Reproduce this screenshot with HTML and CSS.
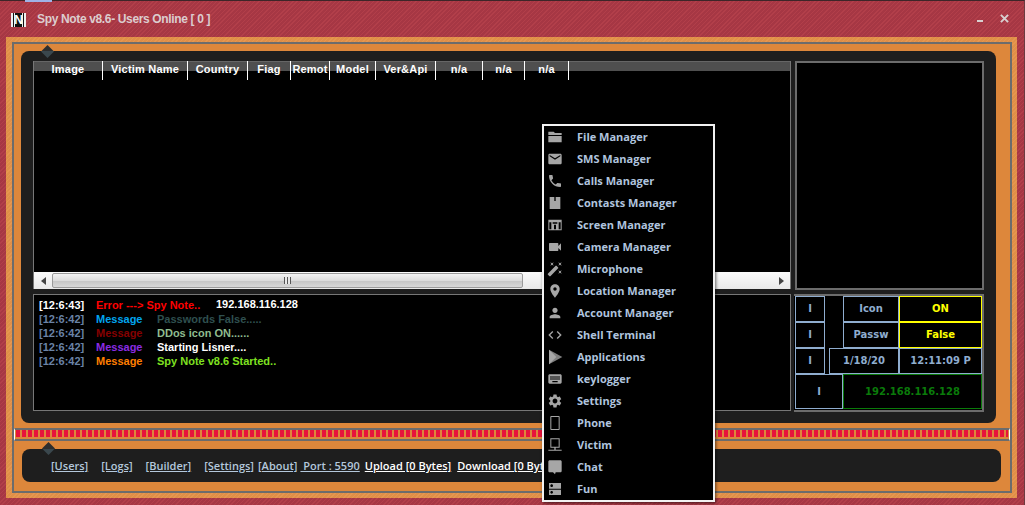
FILE: index.html
```html
<!DOCTYPE html>
<html lang="en">
<head>
  <meta charset="UTF-8" />
  <title>Spy Note v8.6</title>
  <link rel="stylesheet" href="styles.css">
</head>
<body>
  <div class="window">
    <div class="taskbar-sliver"></div>

    <div class="titlebar">
      <span class="logo">N</span>
      <span class="title">Spy Note v8.6- Users Online [ 0 ]</span>
      <span class="win-btn win-min"></span>
      <svg class="win-btn win-close" viewBox="0 0 10 10"><path d="M1 1l8 8M9 1l-8 8" /></svg>
    </div>

    <div class="frame">
      <div class="frame-inner">
        <div class="panel main-panel">
          <span class="notch"></span>

          <div class="users-box">
            <div class="users-head">
              <span class="col col-1">Image</span>
              <span class="col col-2">Victim Name</span>
              <span class="col col-3">Country</span>
              <span class="col col-4">Fiag</span>
              <span class="col col-5">Remot</span>
              <span class="col col-6">Model</span>
              <span class="col col-7">Ver&amp;Api</span>
              <span class="col col-8">n/a</span>
              <span class="col col-9">n/a</span>
              <span class="col col-10">n/a</span>
            </div>
            <div class="users-body"></div>
            <div class="hscroll">
              <span class="arrow arrow-left"></span>
              <span class="thumb"><span class="grip"></span></span>
              <span class="arrow arrow-right"></span>
            </div>
          </div>

          <div class="preview-box"></div>

          <div class="log-box">
            <div class="log-row first">
              <span class="time">[12:6:43]</span>
              <span class="kind kind-wide red">Error ---&gt; Spy Note..</span>
              <span class="msg white up">192.168.116.128</span>
            </div>
            <div class="log-row">
              <span class="time">[12:6:42]</span>
              <span class="kind blue">Message</span>
              <span class="msg slate">Passwords False.....</span>
            </div>
            <div class="log-row">
              <span class="time">[12:6:42]</span>
              <span class="kind maroon">Message</span>
              <span class="msg sea">DDos icon ON......</span>
            </div>
            <div class="log-row">
              <span class="time">[12:6:42]</span>
              <span class="kind violet">Message</span>
              <span class="msg white">Starting Lisner....</span>
            </div>
            <div class="log-row">
              <span class="time">[12:6:42]</span>
              <span class="kind amber">Message</span>
              <span class="msg lime">Spy Note v8.6 Started..</span>
            </div>
          </div>

          <div class="info-box">
            <div class="cell c-i r1">I</div>
            <div class="cell c-label r1">Icon</div>
            <div class="cell c-val r1 yellow">ON</div>
            <div class="cell c-i r2">I</div>
            <div class="cell c-label r2">Passw</div>
            <div class="cell c-val r2 yellow">False</div>
            <div class="cell c-i r3">I</div>
            <div class="cell c-date r3">1/18/20</div>
            <div class="cell c-val r3">12:11:09 P</div>
            <div class="cell c-i-wide r4">I</div>
            <div class="cell c-ip r4">192.168.116.128</div>
          </div>
        </div>

        <div class="progress"><div class="blocks"></div></div>

        <div class="panel status-panel">
          <span class="notch"></span>
          <a class="link l-users">[Users]</a>
          <a class="link l-logs">[Logs]</a>
          <a class="link l-builder">[Builder]</a>
          <a class="link l-settings">[Settings]</a>
          <a class="link l-about">[About]</a>
          <a class="link l-port">&nbsp;Port : 5590</a>
          <a class="link bright l-upload">Upload [0 Bytes]</a>
          <a class="link bright l-download">Download [0 Bytes]</a>
        </div>
      </div>
    </div>
  </div>

  <ul class="menu">
    <li><svg viewBox="0 0 24 24"><path d="M2 4h8l2 2h10v3H2zM2 10.500h20V20H2z" /></svg>File Manager</li>
    <li><svg viewBox="0 0 24 24"><path d="M20 4H4c-1.100 0-1.990.9-1.990 2L2 18c0 1.100.9 2 2 2h16c1.100 0 2-.9 2-2V6c0-1.100-.9-2-2-2zm0 4l-8 5-8-5V6l8 5 8-5v2z" /></svg>SMS Manager</li>
    <li><svg viewBox="0 0 24 24"><path d="M6.620 10.790c1.440 2.830 3.760 5.140 6.590 6.590l2.200-2.200c.27-.27.67-.36 1.020-.24 1.120.37 2.330.57 3.570.57.55 0 1 .45 1 1V20c0 .55-.45 1-1 1-9.390 0-17-7.610-17-17 0-.55.45-1 1-1h3.500c.55 0 1 .45 1 1 0 1.250.2 2.450.57 3.570.11.35.03.74-.25 1.020l-2.200 2.200z" /></svg>Calls Manager</li>
    <li><svg viewBox="0 0 24 24"><path d="M4 3h7v6h2V3h7v18H4z" /></svg>Contasts Manager</li>
    <li><svg viewBox="0 0 24 24"><path fill-rule="evenodd" d="M2 4h20v16H2zM3.500 8v10.500h3V8zm5 0v2h7V8zm2 3.500v7h3v-7zm7-3.500v10.500h3V8z" /></svg>Screen Manager</li>
    <li><svg viewBox="0 0 24 24"><path d="M17 10.500V7c0-.55-.45-1-1-1H4c-.55 0-1 .45-1 1v10c0 .55.45 1 1 1h12c.55 0 1-.45 1-1v-3.500l4 4v-11l-4 4z" /></svg>Camera Manager</li>
    <li><svg viewBox="0 0 24 24"><path d="M7.500 5.600L10 7 8.600 4.500 10 2 7.500 3.400 5 2l1.400 2.500L5 7zm12 9.800L17 14l1.400 2.500L17 19l2.500-1.400L22 19l-1.400-2.500L22 14zM22 2l-2.500 1.400L17 2l1.400 2.500L17 7l2.500-1.400L22 7l-1.400-2.500zm-7.630 5.290c-.39-.39-1.020-.39-1.410 0L1.290 18.960c-.39.39-.39 1.020 0 1.410l2.340 2.340c.39.39 1.020.39 1.410 0L16.700 11.050c.39-.39.39-1.020 0-1.410l-2.330-2.350z" /></svg>Microphone</li>
    <li><svg viewBox="0 0 24 24"><path d="M12 2C8.130 2 5 5.130 5 9c0 5.250 7 13 7 13s7-7.750 7-13c0-3.870-3.130-7-7-7zm0 9.500c-1.380 0-2.500-1.120-2.500-2.500s1.120-2.500 2.500-2.500 2.500 1.120 2.500 2.500-1.120 2.500-2.500 2.500z" /></svg>Location Manager</li>
    <li><svg viewBox="0 0 24 24"><path d="M12 12c2.210 0 4-1.790 4-4s-1.790-4-4-4-4 1.790-4 4 1.790 4 4 4zm0 2c-2.670 0-8 1.340-8 4v2h16v-2c0-2.660-5.330-4-8-4z" /></svg>Account Manager</li>
    <li><svg viewBox="0 0 24 24"><path d="M9.400 16.600L4.800 12l4.600-4.600L8 6l-6 6 6 6 1.400-1.400zm5.200 0l4.600-4.600-4.600-4.600L16 6l6 6-6 6-1.400-1.400z" /></svg>Shell Terminal</li>
    <li><svg viewBox="0 0 24 24"><path class="shade" d="M3 1l20 11L3 23z" /><path d="M3 1l11 11L3 23z" /></svg>Applications</li>
    <li><svg viewBox="0 0 24 24"><path d="M20 5H4c-1.100 0-1.990.9-1.990 2L2 17c0 1.100.9 2 2 2h16c1.100 0 2-.9 2-2V7c0-1.100-.9-2-2-2zm-9 3h2v2h-2V8zm0 3h2v2h-2v-2zM8 8h2v2H8V8zm0 3h2v2H8v-2zm-1 2H5v-2h2v2zm0-3H5V8h2v2zm9 7H8v-2h8v2zm0-4h-2v-2h2v2zm0-3h-2V8h2v2zm3 3h-2v-2h2v2zm0-3h-2V8h2v2z" /></svg>keylogger</li>
    <li><svg viewBox="0 0 24 24"><path d="M19.140 12.940c.04-.3.06-.61.06-.94 0-.32-.02-.64-.07-.94l2.030-1.580c.18-.14.23-.41.12-.61l-1.920-3.320c-.12-.22-.37-.29-.59-.22l-2.390.96c-.5-.38-1.030-.7-1.620-.94l-.36-2.540c-.04-.24-.24-.41-.48-.41h-3.840c-.24 0-.43.17-.47.41l-.36 2.540c-.59.24-1.130.57-1.620.94l-2.390-.96c-.22-.08-.47 0-.59.22L2.740 8.870c-.12.21-.08.47.12.61l2.030 1.580c-.05.3-.09.63-.09.94s.02.64.07.94l-2.030 1.580c-.18.14-.23.41-.12.61l1.920 3.320c.12.22.37.29.59.22l2.390-.96c.5.38 1.030.7 1.620.94l.36 2.540c.05.24.24.41.48.41h3.840c.24 0 .44-.17.47-.41l.36-2.540c.59-.24 1.130-.56 1.620-.94l2.390.96c.22.08.47 0 .59-.22l1.920-3.320c.12-.22.07-.47-.12-.61l-2.010-1.580zM12 15.600c-1.980 0-3.600-1.620-3.600-3.600s1.620-3.600 3.600-3.600 3.600 1.620 3.600 3.600-1.620 3.600-3.600 3.600z" /></svg>Settings</li>
    <li><svg viewBox="0 0 24 24"><path fill-rule="evenodd" d="M6.500 1.500h11c.8 0 1.500.7 1.500 1.500v18c0 .8-.7 1.500-1.500 1.500h-11c-.8 0-1.500-.7-1.500-1.500V3c0-.8.7-1.500 1.500-1.500zM6.500 3v18h11V3z" /></svg>Phone</li>
    <li><svg viewBox="0 0 24 24"><path fill-rule="evenodd" d="M5 2h14v14H5zM6.500 3.500v11h11v-11zM11 16h2v3h-2zM2 19h20v1.500H2z" /></svg>Victim</li>
    <li><svg viewBox="0 0 24 24"><path d="M20 2H4c-1.100 0-1.990.9-1.990 2L2 18c0 1.100.9 2 2 2h5l3 3 1-3h7c1.100 0 2-.9 2-2V4c0-1.100-.9-2-2-2z" /></svg>Chat</li>
    <li><svg viewBox="0 0 24 24"><path d="M21 13H3v8h18zM7 19c-1.100 0-2-.9-2-2s.9-2 2-2 2 .9 2 2-.9 2-2 2zM21 3H3v8.500h18zM7 9c-1.100 0-2-.9-2-2s.9-2 2-2 2 .9 2 2-.9 2-2 2z" /></svg>Fun</li>
  </ul>
</body>
</html>
```

FILE: styles.css
```css
* {
  box-sizing: border-box;
}

html, body {
  margin: 0;
  padding: 0;
  width: 1025px;
  height: 505px;
  overflow: hidden;
  background: #a93a45;
  font-family: 'Liberation Sans', Arial, sans-serif;
}

.window {
  position: relative;
  width: 1025px;
  height: 505px;
  border-top: 1px solid #3d2528;
  border-right: 1px solid #6d3a40;
  background: repeating-linear-gradient(135deg, #b23f4a 0 1px, #a63744 1px 3px);
}

.taskbar-sliver {
  position: absolute;
  top: -1px;
  left: 25px;
  width: 27px;
  height: 2px;
  background: #9fb2e6;
}

.titlebar {
  height: 36px;
  display: flex;
  align-items: center;
  padding: 0 15px 0 11px;
}

.logo {
  width: 15px;
  height: 14px;
  margin-top: 1px;
  background: linear-gradient(90deg, #eee 0 2px, #111 2px 3px, #eee 3px 4px, #111 4px 11px, #eee 11px 12px, #111 12px 13px, #eee 13px);
  color: #fff;
  font-size: 12px;
  font-weight: bold;
  line-height: 14px;
  text-align: center;
}

.title {
  margin-left: 11px;
  color: #dccdcf;
  font-size: 12px;
  font-weight: bold;
  letter-spacing: -0.35px;
}

.win-btn {
  flex: none;
}

.win-min {
  width: 6px;
  height: 2px;
  margin: 3px 0 0 auto;
  background: #d8d0d0;
}

.win-close {
  width: 9px;
  height: 9px;
  margin: -2px 0 0 17px;
  fill: none;
  stroke: #d8d0d0;
  stroke-width: 2.2;
}

.frame {
  margin: 0 7px 0 6px;
  height: 461px;
  padding: 5px 5px 5px 6px;
  background: repeating-linear-gradient(135deg, #e6974f 0 1px, #df8f48 1px 3px);
}

.frame-inner {
  height: 451px;
  padding: 7px 0 0 7px;
  border: 2px solid #6c6c6c;
  background: #dd873b;
}

.panel {
  position: relative;
  background: #1e1e1e;
}

.notch {
  position: absolute;
  top: -6px;
  left: 20px;
  width: 13px;
  height: 13px;
  background: linear-gradient(180deg, #2e2e2e 50%, #3a474d 50%);
  clip-path: polygon(50% 0, 100% 50%, 50% 100%, 0 50%);
}

.main-panel {
  width: 975px;
  height: 372px;
  border-radius: 8px;
  padding: 10px 12px 11px;
  display: grid;
  grid-template-columns: 758px 190px;
  grid-template-rows: 229px 118px;
  column-gap: 3px;
  row-gap: 4px;
}

/* users list */
.users-box {
  display: flex;
  flex-direction: column;
  background: #000;
  border: 1px solid #777;
  border-top: 0;
  border-bottom: 0;
  height: 228px;
}

.users-head {
  display: flex;
  height: 19px;
  background: linear-gradient(180deg, #666 0 1px, #4f4f4f 1px 10px, #000 10px);
}

.col {
  height: 19px;
  padding-top: 1px;
  border-right: 1px solid #fff;
  color: #fff;
  font-size: 11px;
  font-weight: bold;
  letter-spacing: 0.2px;
  line-height: 15px;
  text-align: center;
  white-space: nowrap;
}

.col-1 { width: 69px; }
.col-2 { width: 85px; }
.col-3 { width: 60px; }
.col-4 { width: 43px; }
.col-5 { width: 39px; }
.col-6 { width: 46px; }
.col-7 { width: 60px; }
.col-8 { width: 47px; }
.col-9 { width: 42px; }
.col-10 { width: 44px; }

.users-body {
  flex: 1;
}

.hscroll {
  height: 17px;
  display: flex;
  align-items: center;
  background: linear-gradient(180deg, #fafafa, #e8e8e8);
}

.arrow {
  width: 18px;
  height: 17px;
  display: flex;
  align-items: center;
  justify-content: center;
  flex: none;
}

.arrow::before {
  content: "";
  border: 4px solid transparent;
}

.arrow-left::before {
  border-left: 0;
  border-right: 5px solid #444;
}

.arrow-right {
  margin-left: auto;
}

.arrow-right::before {
  border-right: 0;
  border-left: 5px solid #444;
}

.thumb {
  width: 471px;
  height: 15px;
  display: flex;
  align-items: center;
  justify-content: center;
  border: 1px solid #9a9a9a;
  border-radius: 2px;
  background: linear-gradient(180deg, #f2f2f2 0, #dcdcdc 50%, #c6c6c6 55%, #d8d8d8 100%);
}

.grip {
  width: 7px;
  height: 7px;
  background: repeating-linear-gradient(90deg, #555 0 1px, #e8e8e8 1px 3px);
}

.preview-box {
  background: #000;
  border: 2px solid #6c6c6c;
  margin-left: 1px;
  width: 189px;
}

/* log */
.log-box {
  height: 117px;
  padding: 3px 5px;
  background: #000;
  border: 1px solid #777;
  font-size: 11px;
  font-weight: bold;
  line-height: 14px;
}

.log-row {
  display: flex;
  height: 14px;
  white-space: nowrap;
}

.time {
  width: 57px;
  color: #6a83a6;
}

.first .time {
  color: #fff;
}

.kind {
  width: 61px;
}

.kind-wide {
  width: 120px;
}

.up {
  margin-top: -1px;
}

.red { color: #f00; }
.white { color: #fff; }
.blue { color: #00a5ef; }
.maroon { color: #850000; }
.violet { color: #8a2be2; }
.amber { color: #ff7f00; }
.slate { color: #2f4f4f; }
.sea { color: #8fbc8f; }
.lime { color: #7fe020; }

/* info grid */
.info-box {
  display: grid;
  grid-template-columns: 30px 4px 14px 56px 83px;
  grid-template-rows: 26px 26px 26px 35px;
  padding-left: 1px;
  background: #000;
  border: 2px solid #6c6c6c;
  border-left: 0;
  width: 190px;
  height: 118px;
  font-family: 'DejaVu Sans', Verdana, sans-serif;
  font-size: 10px;
  font-weight: bold;
  color: #8fadcf;
}

.cell {
  display: flex;
  align-items: center;
  justify-content: center;
  padding-bottom: 2px;
  border: 1px solid #8fadcf;
  white-space: nowrap;
}

.r1 { grid-row: 1; }
.r2 { grid-row: 2; }
.r3 { grid-row: 3; }
.r4 { grid-row: 4; padding-bottom: 0; }

.c-i { grid-column: 1; }
.c-i-wide { grid-column: 1 / 4; }
.c-label { grid-column: 4; }
.c-date { grid-column: 3 / 5; }
.c-val { grid-column: 5; }
.c-ip { grid-column: 4 / 6; border-color: #0a7a0a; color: #0a7a0a; }

.yellow {
  border-color: #ffff00;
  color: #ffff00;
}

/* red progress strip */
.progress {
  width: 996px;
  height: 13px;
  margin: 5px 0 0 -7px;
  padding: 0 1px 2px;
  border-top: 2px solid #6c6c6c;
  border-bottom: 2px solid #6c6c6c;
  border-left: 1px solid #fff;
  border-right: 1px solid #fff;
}

.blocks {
  height: 7px;
  background: repeating-linear-gradient(90deg, #e7143c 0 4px, #dd873b 4px 6px);
}

/* bottom bar */
.status-panel {
  width: 979px;
  height: 33px;
  margin: 8px 0 0 1px;
  padding-left: 29px;
  border-radius: 8px;
  display: flex;
  align-items: center;
  font-family: 'Open Sans', sans-serif;
  font-size: 11px;
  font-weight: 600;
  white-space: nowrap;
}

.status-panel .notch {
  top: -7px;
}

.link {
  color: #b4c8dc;
  text-decoration: underline;
}

.bright {
  color: #fff;
}

.l-logs { margin-left: 13px; }
.l-builder { margin-left: 13px; }
.l-settings { margin-left: 13px; }
.l-about { margin-left: 4px; }
.l-port { margin-left: 3px; }
.l-upload { margin-left: 5px; }
.l-download { margin-left: 6px; }

/* context menu */
.menu {
  position: absolute;
  top: 124px;
  left: 542px;
  width: 173px;
  margin: 0;
  padding: 0;
  list-style: none;
  background: #000;
  border: 2px solid #f2f2f2;
  box-shadow: 1px 1px 3px rgba(0, 0, 0, 0.6);
  font-family: 'Open Sans', sans-serif;
  font-size: 11px;
  font-weight: 700;
  color: #b0c4de;
}

.menu li {
  height: 22px;
  display: flex;
  align-items: center;
  padding: 0 0 2px 3px;
  white-space: nowrap;
}

.menu svg {
  width: 16px;
  height: 16px;
  margin: 0 14px -2px 0;
  flex: none;
  fill: #a6a6a6;
}

.menu svg .shade {
  fill: #7e7e7e;
}
```
